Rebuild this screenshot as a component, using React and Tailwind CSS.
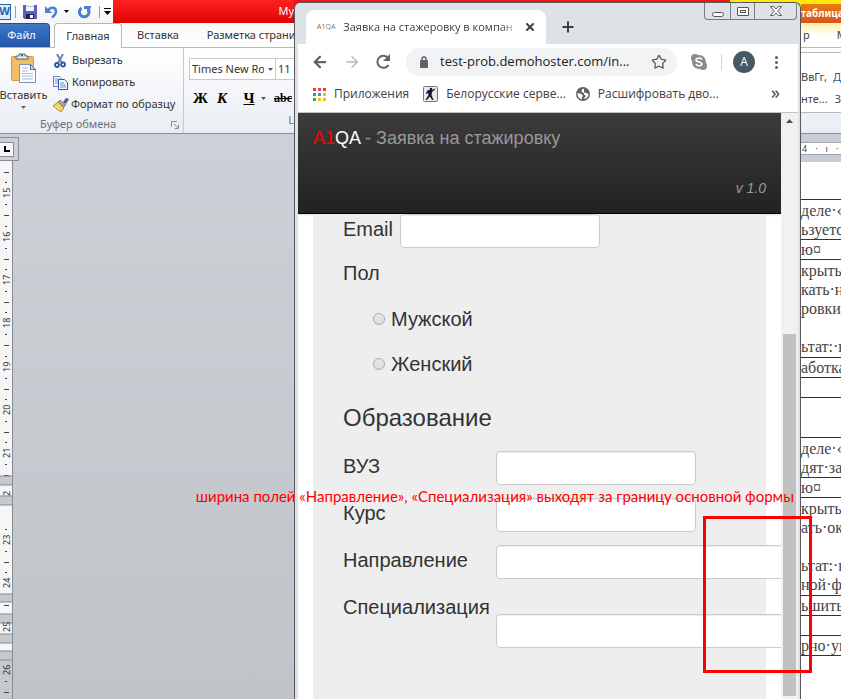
import React from "react";
import { ArrowLeft, ArrowRight, Star, X, Plus } from "lucide-react";

const OFFICE_FONT = "font-['Noto_Sans','Open_Sans',sans-serif]";
const CHROME_FONT = "font-['Open_Sans','Noto_Sans',sans-serif]";

function Caret({ className = "" }) {
  return (
    <svg className={"shrink-0 " + className} width="7" height="4" viewBox="0 0 7 4" fill="currentColor" aria-hidden="true">
      <path d="M0 0h7L3.5 4z" />
    </svg>
  );
}

function SmallCaret({ className = "" }) {
  return (
    <svg className={"shrink-0 " + className} width="5" height="3" viewBox="0 0 5 3" fill="currentColor" aria-hidden="true">
      <path d="M0 0h5L2.5 3z" />
    </svg>
  );
}

function SaveIcon() {
  return (
    <svg width="14" height="14" viewBox="0 0 14 14" aria-hidden="true">
      <path d="M0 0h14v14H1.500L0 12.500z" fill="#5a5fc0" />
      <path d="M3 0h8v6H3z" fill="#f4f6ff" />
      <path d="M3 1h8v1H3z" fill="#b9c2ea" />
      <path d="M3 9h8v5H3z" fill="#23264f" />
      <path d="M7 10h3v3H7z" fill="#fff" />
    </svg>
  );
}

function UndoIcon() {
  return (
    <svg width="13" height="14" viewBox="0 0 13 14" aria-hidden="true">
      <path d="M3 5.500C6 1 11 2.500 11 6.500c0 3-2 4.500-4 6" fill="none" stroke="#4f82cc" strokeWidth="2.500" />
      <path d="M0 1v7h7z" fill="#4f82cc" />
    </svg>
  );
}

function RedoIcon() {
  return (
    <svg width="13" height="14" viewBox="0 0 13 14" aria-hidden="true">
      <path d="M3.500 3a4.800 4.800 0 1 0 6.500 1" fill="none" stroke="#4a7fd0" strokeWidth="3" />
      <path d="M6 1h7v1l-2 5H9V4H6z" fill="#4a7fd0" />
    </svg>
  );
}

function ClipboardIcon() {
  return (
    <svg width="26" height="31" viewBox="0 0 26 31" aria-hidden="true">
      <rect x="0.500" y="3.500" width="22" height="24" rx="1" fill="#efbd66" stroke="#d49b3e" />
      <path d="M5 6V3h3V1h6v2h3v3z" fill="#e8ebf0" stroke="#555e6b" />
      <circle cx="11" cy="2.500" r="1" fill="#333" />
      <path d="M8.500 11.500h11l5 5v13h-16z" fill="#fafcff" stroke="#7d93b2" />
      <path d="M19.500 11.500v5h5z" fill="#cfdcf0" stroke="#506a92" />
      <path d="M11 15h6M11 18h6M11 20.500h11M11 23h11M11 26h11" stroke="#a9bcd8" />
    </svg>
  );
}

function ScissorsIcon() {
  return (
    <svg width="15" height="14" viewBox="0 0 15 14" fill="none" aria-hidden="true">
      <path d="M4 0l5 9M10 0L5 9" stroke="#6c86aa" strokeWidth="2" />
      <circle cx="4" cy="11" r="2" stroke="#2a57a4" strokeWidth="1.800" />
      <circle cx="10" cy="10.500" r="2" stroke="#2a57a4" strokeWidth="1.800" />
    </svg>
  );
}

function CopyIcon() {
  return (
    <svg width="15" height="14" viewBox="0 0 15 14" aria-hidden="true">
      <path d="M0.500 0.500h6l2 2v8h-8z" fill="#f4f9ff" stroke="#5f84bd" />
      <path d="M2 3h4M2 5h4M2 7h3" stroke="#5f9ae0" />
      <path d="M5.500 3.500h6l3 3v7h-9z" fill="#f4f9ff" stroke="#35589b" />
      <path d="M7 7h4M7 9h6M7 11h6" stroke="#5f9ae0" />
    </svg>
  );
}

function BrushIcon() {
  return (
    <svg width="16" height="14" viewBox="0 0 16 14" aria-hidden="true">
      <path d="M10 4l3-4 3 1-3 5z" fill="#575a8c" />
      <path d="M7 2l6 5-2 2-6-5z" fill="#a9a9a9" stroke="#6c6c6c" strokeWidth="0.700" />
      <path d="M5 4l6 6-3 4-8-6z" fill="#f3d25c" stroke="#98762a" strokeWidth="0.800" />
      <path d="M2 8l5 4" stroke="#fff3ae" />
    </svg>
  );
}

const RULER_MARKS = [
  [15, 32], [16, 76], [17, 119], [18, 162], [19, 206], [20, 249], [21, 292], [23, 379], [24, 422], [26, 509],
];

function VerticalRuler() {
  return (
    <svg width="14" height="540" viewBox="0 0 14 540" aria-hidden="true">
      <path d="M0 0h13v540H0z" fill="#f6f6f6" />
      {RULER_MARKS.map(([n, y]) => (
        <path key={n} d={`M5 ${y - 10.5}h2M5 ${y + 11.5}h2M4 ${y + 22.5}h5`} stroke="#444" />
      ))}
      <path d="M0 315h13v9H0zM0 335h13v9H0zM0 433h13v8H0zM0 453h13v9H0zM0 473h13v9H0zM0 490h13v50H0z" fill="#c6cacf" />
      <path d="M0 315h13M0 324h13M0 335h13M0 344h13M0 433h13M0 441h13M0 453h13M0 462h13M0 473h13M0 482h13M0 490h13M0 499h13" stroke="#858c94" />
      <path d="M4 11.500h5M5 520.500h2M4 531.500h5" stroke="#444" />
      {RULER_MARKS.map(([n, y]) => (
        <text key={n} x="0" y="0" transform={`translate(10 ${y + 5}) rotate(-90)`} fontSize="9" fill="#333">{n}</text>
      ))}
      <text x="0" y="0" transform="translate(10 335) rotate(-90)" fontSize="9" fill="#333">2</text>
      <text x="0" y="0" transform="translate(10 471) rotate(-90)" fontSize="9" fill="#333">25</text>
      <path d="M12.500 0v540" stroke="#858c94" />
    </svg>
  );
}

function WordWindow() {
  return (
    <section className={"flex w-[294px] shrink-0 flex-col overflow-hidden text-[11px] text-[#333] " + OFFICE_FONT}>
      <div className="flex h-[23px] shrink-0 bg-linear-to-b from-[#ff2020] to-[#e00000]">
        <div className="flex w-[113px] shrink-0 items-center bg-linear-to-b from-white to-[#f4f4f4]">
          <span className="flex h-4 w-[11px] items-center justify-end border border-l-0 border-[#2a65ad] bg-[#dcebfb] text-[11px] font-bold text-[#2a65ad]">W</span>
          <span className="ml-1 h-3 w-px bg-gray-400" />
          <button aria-label="Сохранить" className="ml-[7px]"><SaveIcon /></button>
          <button aria-label="Отменить" className="ml-2"><UndoIcon /></button>
          <SmallCaret className="ml-[6px] text-black" />
          <button aria-label="Повторить" className="ml-[9px]"><RedoIcon /></button>
          <span className="ml-2 h-3 w-px bg-gray-400" />
          <button aria-label="Настройка панели" className="ml-1 flex flex-col items-center gap-[2px] text-black">
            <span className="h-px w-[7px] bg-black" />
            <Caret />
          </button>
        </div>
        <h1 className="flex flex-1 items-center justify-end text-white">My</h1>
      </div>

      <nav className="flex h-[25px] shrink-0 items-end border-b border-[#b5b8bd] bg-linear-to-b from-[#f8f8f8] to-white whitespace-nowrap">
        <button className="h-6 w-[50px] shrink-0 rounded-tr border border-l-0 border-[#1d4f9c] bg-linear-to-b from-[#3c77c8] to-[#2259ae] pr-[6px] text-white">Файл</button>
        <button className="-mb-px ml-1 h-[25px] w-[68px] shrink-0 rounded-t border border-b-0 border-[#b5b8bd] bg-white">Главная</button>
        <button className="ml-[15px] h-6 shrink-0">Вставка</button>
        <button className="ml-7 h-6 shrink-0">Разметка страни</button>
      </nav>

      <div className="flex h-[86px] shrink-0 border-b border-[#8a8f96] bg-linear-to-b from-white to-[#e9edf3] whitespace-nowrap">
        <div className="flex w-[184px] shrink-0 flex-col border-r border-[#c6cad0]">
          <div className="flex h-[68px]">
            <button className="flex w-[47px] shrink-0 flex-col items-center pt-[5px]">
              <ClipboardIcon />
              <span className="leading-[22px]">Вставить</span>
              <SmallCaret className="text-[#666]" />
            </button>
            <div className="flex flex-col gap-px pt-[2px] pl-[6px]">
              <button className="flex h-[21px] items-center gap-1"><ScissorsIcon />Вырезать</button>
              <button className="flex h-[21px] items-center gap-1"><CopyIcon />Копировать</button>
              <button className="flex h-[21px] items-center gap-[2px]"><BrushIcon />Формат по образцу</button>
            </div>
          </div>
          <div className="flex flex-1 items-center pl-10 text-[#6b727c]">
            <span className="flex-1">Буфер обмена</span>
            <svg className="mr-1" width="8" height="8" viewBox="0 0 8 8" fill="none" stroke="#8a8f96" aria-hidden="true">
              <path d="M0.500 6V0.500H6M3 3l4 4M7.500 3.500v4h-4" />
            </svg>
          </div>
        </div>
        <div className="flex min-w-0 flex-1 flex-col overflow-hidden pt-[10px] pl-[5px]">
          <div className="flex shrink-0">
            <div className="flex h-[22px] w-[87px] shrink-0 items-center border border-[#c6cad0] bg-white px-[2px]">
              <select aria-label="Шрифт" className="w-[72px] appearance-none overflow-hidden bg-transparent">
                <option>Times New Roman</option>
              </select>
              <SmallCaret className="ml-1 text-[#555]" />
            </div>
            <select aria-label="Размер" className="h-[22px] w-10 shrink-0 appearance-none border border-l-0 border-[#c6cad0] bg-white px-[2px]">
              <option>11</option>
            </select>
          </div>
          <div className="mt-2 flex h-5 shrink-0 items-center font-['Liberation_Serif',serif] text-[15px] font-bold text-black">
            <button aria-label="Полужирный" className="w-6 pl-1 text-left">Ж</button>
            <button aria-label="Курсив" className="w-6 pl-1 text-left italic">К</button>
            <button aria-label="Подчеркнутый" className="w-6 underline">Ч</button>
            <SmallCaret className="text-[#555]" />
            <button aria-label="Зачеркнутый" className="ml-2 text-[12px] line-through">abc</button>
          </div>
          <div className="flex flex-1 items-center justify-end text-[#6b727c]">L</div>
        </div>
      </div>

      <div className="flex flex-1 flex-col bg-linear-to-b from-[#cdd1d7] to-[#c0c3c8]">
        <div className="mt-[3px] flex h-6 w-[19px] shrink-0 items-center border border-l-0 border-[#858c94]">
          <span className="flex h-[15px] w-[14px] items-center justify-center border border-l-0 border-[#858c94] bg-[#f6f6f6]">
            <span className="h-[6px] w-[6px] border-b-2 border-l-2 border-black" />
          </span>
        </div>
        <VerticalRuler />
      </div>
    </section>
  );
}

function AppsIcon() {
  const colors = ["#ea4335", "#ea4335", "#ea4335", "#34a853", "#4285f4", "#fbbc04", "#34a853", "#fbbc04", "#fbbc04"];
  return (
    <svg width="13" height="13" viewBox="0 0 13 13" aria-hidden="true">
      {colors.map((c, i) => <rect key={i} x={(i % 3) * 5} y={Math.floor(i / 3) * 5} width="3" height="3" fill={c} />)}
    </svg>
  );
}

function SoldierIcon() {
  return (
    <svg width="15" height="16" viewBox="0 0 15 16" aria-hidden="true">
      <rect x="0.500" y="0.500" width="14" height="15" rx="1" fill="#e8eaee" stroke="#777" />
      <circle cx="8" cy="3" r="1.300" fill="#15162d" />
      <path d="M5 4h4l3-1.500v1L9 6 8.500 9l2 5H9L7 10.500 4 14H2.500l3-5L5 7 3.500 8 3 7z" fill="#15162d" />
    </svg>
  );
}

function GlobeIcon() {
  return (
    <svg width="14" height="14" viewBox="0 0 14 14" aria-hidden="true">
      <circle cx="7" cy="7" r="7" fill="#5f6368" />
      <path d="M8 1.500L6 2.500 5.500 4.500 7.500 6 9 5.500 12.500 7c0 2-1.500 4-3.500 5L8 11l2-2-2-1.500z" fill="#fff" />
      <path d="M1.500 6l4 1L7 9l-1 1v2.300C3.500 12 1.500 9.500 1.500 7z" fill="#fff" />
    </svg>
  );
}

function ChromeTop() {
  return (
    <header className={"shrink-0 text-[12px] text-[#3c4043] " + CHROME_FONT}>
      <div className="flex h-[41px] items-end bg-[#dee1e6] pl-2">
        <div className="flex h-[34px] w-60 items-center rounded-t-lg bg-white pr-[10px] pl-[11px]">
          <span className="flex text-[7px] text-[#d04040]"><span>A1</span><span className="text-[#77779a]">QA</span></span>
          <span className="ml-2 w-[176px] overflow-hidden mask-r-from-90% text-[11px] whitespace-nowrap">Заявка на стажеровку в компан</span>
          <button aria-label="Закрыть вкладку" className="ml-auto"><X size={12} strokeWidth={4} /></button>
        </div>
        <button aria-label="Новая вкладка" className="mb-[9px] ml-[14px]"><Plus size={16} strokeWidth={3} /></button>
        <div className="mr-px ml-auto flex h-[17px] self-start rounded-b border border-t-0 border-[#777b82]">
          <button aria-label="Свернуть" className="flex w-[25px] items-center justify-center">
            <span className="mt-[7px] h-[5px] w-3 rounded-sm border border-[#555] bg-white" />
          </button>
          <button aria-label="Развернуть" className="flex w-[25px] items-center justify-center border-x border-[#777b82]">
            <span className="flex h-[9px] w-3 items-center justify-center rounded-[1px] border border-[#555] bg-white">
              <span className="h-[3px] w-[6px] border border-[#555]" />
            </span>
          </button>
          <button aria-label="Закрыть" className="flex w-[41px] items-center justify-center">
            <svg width="12" height="10" viewBox="0 0 12 10" fill="#fff" stroke="#555" aria-hidden="true">
              <path d="M0.500 0.500h3L6 3 8.500 0.500h3L7.800 5l3.700 4.500h-3L6 7 3.500 9.500h-3L4.200 5z" />
            </svg>
          </button>
        </div>
      </div>

      <div className="flex h-9 items-center bg-white pr-5 pl-[13px] text-[#5f6368]">
        <button aria-label="Назад"><ArrowLeft size={18} strokeWidth={3} /></button>
        <button aria-label="Вперед" className="ml-[14px] text-[#b9bbbe]"><ArrowRight size={18} strokeWidth={2} /></button>
        <button aria-label="Обновить" className="ml-[13px]">
          <svg width="18" height="18" viewBox="0 0 18 18" aria-hidden="true">
            <path d="M14.500 12A6 6 0 1 1 14 5" fill="none" stroke="currentColor" strokeWidth="2" />
            <path d="M16 1v7H9z" fill="currentColor" />
          </svg>
        </button>
        <div className="ml-[14px] flex h-7 min-w-0 flex-1 items-center rounded-full bg-[#f1f3f4] pr-[10px] pl-[14px]">
          <svg className="shrink-0" width="8" height="12" viewBox="0 0 8 12" aria-hidden="true">
            <path d="M2 5V3a2 2 0 0 1 4 0v2" fill="none" stroke="#5f6368" strokeWidth="1.500" />
            <rect y="4" width="8" height="8" rx="1" fill="#5f6368" />
          </svg>
          <input aria-label="Адрес" readOnly defaultValue="test-prob.demohoster.com/in..." className="ml-3 min-w-0 flex-1 bg-transparent text-[13px] text-[#202124] outline-none" />
          <button aria-label="В закладки"><Star size={16} strokeWidth={2} /></button>
        </div>
        <svg className="ml-[14px] shrink-0" width="16" height="16" viewBox="0 0 16 16" aria-hidden="true">
          <circle cx="8" cy="8" r="7" fill="#8c8c8c" /><circle cx="4" cy="4" r="4" fill="#8c8c8c" /><circle cx="12" cy="12" r="4" fill="#8c8c8c" />
          <path d="M11 5.500C10 3.500 5 3.800 5 6c0 2.500 6 1.500 6 4 0 2-5 2.500-6 0" fill="none" stroke="#fff" strokeWidth="1.600" />
        </svg>
        <span className="ml-[14px] h-4 w-px bg-[#cfd1d4]" />
        <button aria-label="Профиль" className="ml-[11px] flex size-[22px] items-center justify-center rounded-full bg-[#455a64] text-white">A</button>
        <button aria-label="Меню" className="ml-5 flex flex-col gap-[2px]">
          <span className="size-[3px] rounded-full bg-current" />
          <span className="size-[3px] rounded-full bg-current" />
          <span className="size-[3px] rounded-full bg-current" />
        </button>
      </div>

      <nav className="flex h-[33px] items-center border-b border-[#c4c4c4] bg-white pb-1 pl-[15px] whitespace-nowrap">
        <a href="#apps" className="flex items-center gap-2"><AppsIcon />Приложения</a>
        <a href="#servers" className="ml-[14px] flex items-center gap-2"><SoldierIcon />Белорусские серве...</a>
        <a href="#decode" className="ml-[10px] flex items-center gap-2"><GlobeIcon />Расшифровать дво...</a>
        <button aria-label="Другие закладки" className="mr-[18px] ml-auto pb-1 text-[18px] leading-4">»</button>
      </nav>
    </header>
  );
}

const FIELD = "h-[34px] rounded border border-[#ccc] bg-white px-2 shadow-[inset_0_1px_1px_rgba(0,0,0,0.075)]";

function Field({ id, label, wide, tall }) {
  return (
    <div className={"flex h-[34px] " + (tall ? "mb-[35px]" : "mb-[13px]")}>
      <label htmlFor={id} className="w-[153px] shrink-0 leading-[30px]">{label}</label>
      <input id={id} type="text" className={FIELD + " shrink-0 " + (wide ? "w-[400px]" : "w-[200px]") + (tall ? " mt-[22px]" : "")} />
    </div>
  );
}

function Radio({ label }) {
  return (
    <label className="flex h-[45px] items-center gap-[6px] pl-[30px]">
      <input type="radio" name="sex" className="size-3 appearance-none rounded-full border border-[#aaa] bg-linear-to-b from-[#e8e8e8] to-[#dcdcdc]" />
      {label}
    </label>
  );
}

function FormPage() {
  return (
    <div className="flex min-w-0 flex-1 flex-col overflow-hidden bg-white font-['Liberation_Sans',Arial,sans-serif]">
      <header className="flex h-[101px] shrink-0 flex-col justify-between border-b border-black bg-linear-to-b from-[#3c3c3c] to-[#222] px-[15px] pt-[14px] pb-4 text-[#999] shadow-sm">
        <h2 className="text-[18px] leading-[22px]"><span className="text-[#f00]">A1</span><span className="text-white">QA</span> - Заявка на стажировку</h2>
        <p className="text-right text-[14px] leading-[18px] italic">v 1.0</p>
      </header>
      <form className="mx-[15px] flex-1 bg-[#eee] pl-[30px] text-[20px] text-[#333]">
        <div className="flex h-[37px] gap-[7px]">
          <label htmlFor="email" className="leading-[30px]">Email</label>
          <input id="email" type="email" className={FIELD + " w-[200px]"} />
        </div>
        <fieldset>
          <legend className="h-[45px] leading-[45px]">Пол</legend>
          <Radio label="Мужской" />
          <Radio label="Женский" />
        </fieldset>
        <h3 className="h-[65px] pt-[17px] text-[24px] leading-[30px]">Образование</h3>
        <Field id="uni" label="ВУЗ" />
        <Field id="course" label="Курс" />
        <Field id="direction" label="Направление" wide />
        <Field id="spec" label="Специализация" wide tall />
      </form>
    </div>
  );
}

function ChromeWindow() {
  return (
    <section className="relative z-10 flex min-w-0 flex-1 flex-col bg-linear-to-r from-[#f21212] from-86% to-[#ffe80c] to-86% pt-[2px]">
      <div className="flex flex-1 flex-col overflow-hidden rounded-t-md border border-b-0 border-[#55585c] bg-[#dee1e6] pr-[2px] pl-[3px]">
        <ChromeTop />
        <div className="flex flex-1">
          <FormPage />
          <div className="flex w-[17px] shrink-0 flex-col items-center bg-[#f1f1f1] pt-[6px] pb-[5px] text-[#505050]">
            <Caret className="rotate-180" />
            <div className="mt-[211px] w-[13px] flex-1 bg-[#c1c1c1]" />
          </div>
        </div>
      </div>
      <p className="absolute top-[486px] right-[7px] font-['Lato',sans-serif] text-[15px] leading-5 whitespace-nowrap text-[#f00]">
        ширина полей «Направление», «Специализация» выходят за границу основной формы
      </p>
      <div className="absolute top-[516px] -right-[11px] h-[157px] w-[109px] border-3 border-[#f00]" />
    </section>
  );
}

const ROWS = [
  ["h-10", ["деле·«", "ьзуетс"]],
  ["h-5", ["ю¤"]],
  ["h-[98px]", ["крыть", "кать·н", "ровки", "\u00a0", "ьтат:·н"]],
  ["h-5", ["аботка"]],
  ["h-5", []],
  ["h-10", []],
  ["h-10", ["деле·«", "дят·за·"]],
  ["h-5", ["ю¤"]],
  ["h-[98px]", ["крыть", "ать·ок", "\u00a0", "ьтат:·н", "ной·ф"]],
  ["h-5", ["ьшить"]],
  ["h-5", []],
  ["h-5", ["рно·ук"]],
];

function SpreadsheetWindow() {
  return (
    <section className={"flex w-10 shrink-0 flex-col overflow-hidden text-[11px] whitespace-nowrap text-[#444] " + OFFICE_FONT}>
      <div className="h-1 shrink-0 bg-[#ffe80c]" />
      <div className="flex h-[19px] shrink-0 items-center bg-linear-to-b from-[#e87a12] to-[#d9541a] text-[10px] font-bold text-white">таблица</div>
      <div className="flex h-[25px] shrink-0 items-center gap-[27px] border-b border-[#b5b8bd] bg-linear-to-b from-[#fff3a0] to-white to-50% pl-[2px]"><span>р</span><span>М</span></div>
      <div className="flex h-[86px] shrink-0 flex-col border-b border-[#8a8f96] bg-linear-to-b from-white to-[#e9edf3] pt-1">
        <div className="h-[61px] border-y border-[#b5b8bd] bg-white pt-[13px] leading-[22px]">
          <p className="flex justify-between">ВвГг, <span className="text-[#1f5c9c]">Д</span></p>
          <p className="flex justify-between">нте... <span>З</span></p>
        </div>
      </div>
      <div className="flex h-7 shrink-0 flex-col bg-[#c9cdd3] pt-2">
        <div className="flex h-[13px] items-center gap-2 border-y border-[#a0a5ab] bg-white pl-px text-[9px]">4<span>·</span><span>ı</span><span>·</span></div>
      </div>
      <div className="flex-1 bg-white pt-[37px]">
        <table className="w-full border-collapse font-['Liberation_Serif',serif] text-[16px] text-[#444]">
          <tbody>
            {ROWS.map(([height, lines], i) => (
              <tr key={i} className={height}>
                <td className="border-y border-[#333] p-0 align-middle">
                  <div className="w-10 overflow-hidden leading-[19px]">
                    {lines.map((line, j) => <p key={j}>{line}</p>)}
                  </div>
                </td>
              </tr>
            ))}
          </tbody>
        </table>
      </div>
    </section>
  );
}

export default function App() {
  return (
    <main className="flex min-h-screen overflow-hidden">
      <WordWindow />
      <ChromeWindow />
      <SpreadsheetWindow />
    </main>
  );
}
